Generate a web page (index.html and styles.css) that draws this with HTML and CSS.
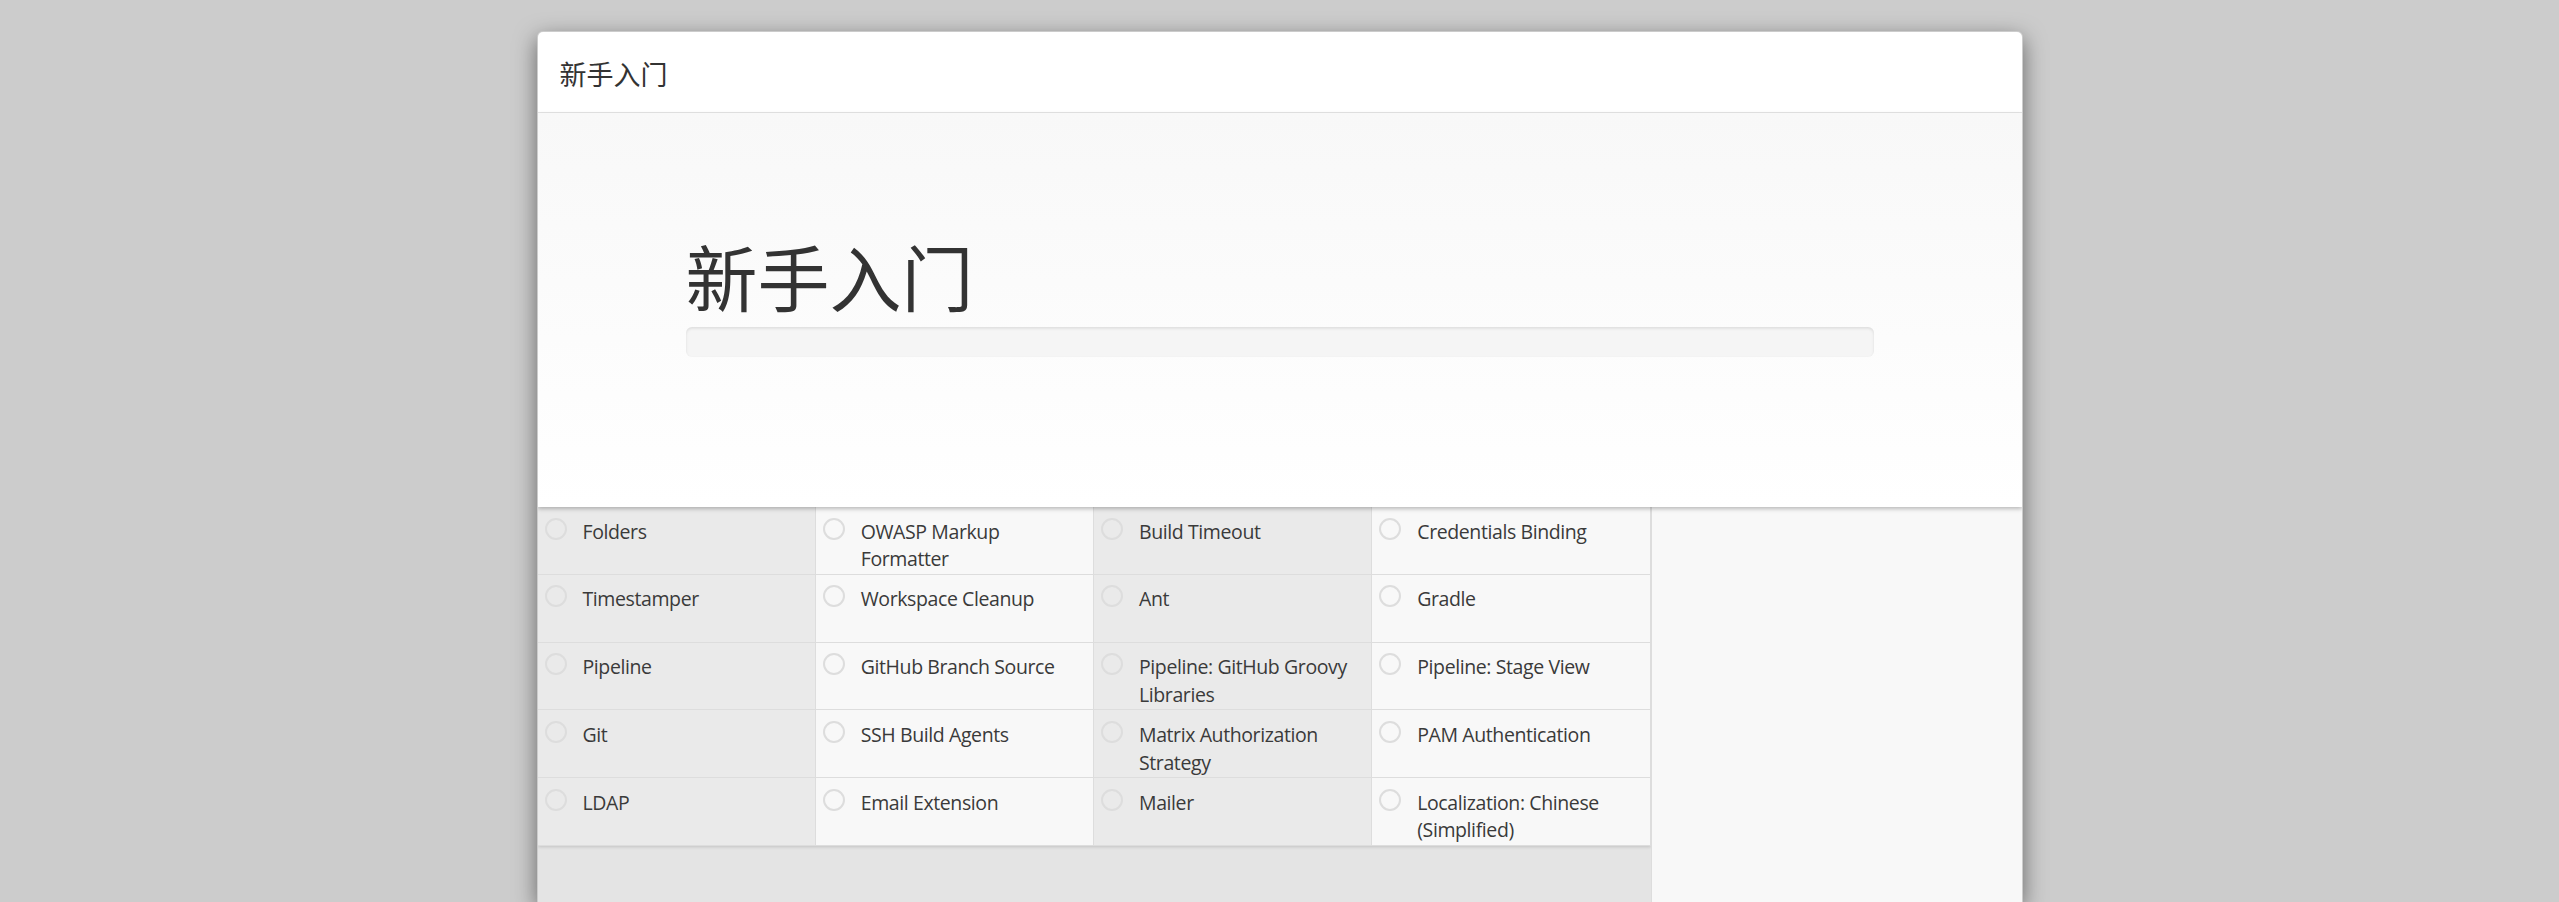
FILE: index.html
```html
<!DOCTYPE html>
<html lang="zh-CN">
<head>
<meta charset="utf-8">
<title>新手入门</title>
<link rel="stylesheet" href="styles.css">
</head>
<body>
<div class="modal">
  <div class="modal-header">
    <h4 class="modal-title">新手入门</h4>
  </div>
  <div class="modal-body">
    <div class="jumbotron">
      <h1 class="jumbo-title">新手入门</h1>
      <div class="progress"></div>
    </div>
    <div class="install-progress">
      <div class="plugins-pane">
        <div class="plugin-grid">
          <div class="plugin"><span class="status"></span><span class="name">Folders</span></div>
          <div class="plugin"><span class="status"></span><span class="name">OWASP Markup Formatter</span></div>
          <div class="plugin"><span class="status"></span><span class="name">Build Timeout</span></div>
          <div class="plugin"><span class="status"></span><span class="name">Credentials Binding</span></div>
          <div class="plugin"><span class="status"></span><span class="name">Timestamper</span></div>
          <div class="plugin"><span class="status"></span><span class="name">Workspace Cleanup</span></div>
          <div class="plugin"><span class="status"></span><span class="name">Ant</span></div>
          <div class="plugin"><span class="status"></span><span class="name">Gradle</span></div>
          <div class="plugin"><span class="status"></span><span class="name">Pipeline</span></div>
          <div class="plugin"><span class="status"></span><span class="name">GitHub Branch Source</span></div>
          <div class="plugin"><span class="status"></span><span class="name">Pipeline: GitHub Groovy Libraries</span></div>
          <div class="plugin"><span class="status"></span><span class="name">Pipeline: Stage View</span></div>
          <div class="plugin"><span class="status"></span><span class="name">Git</span></div>
          <div class="plugin"><span class="status"></span><span class="name">SSH Build Agents</span></div>
          <div class="plugin"><span class="status"></span><span class="name">Matrix Authorization Strategy</span></div>
          <div class="plugin"><span class="status"></span><span class="name">PAM Authentication</span></div>
          <div class="plugin"><span class="status"></span><span class="name">LDAP</span></div>
          <div class="plugin"><span class="status"></span><span class="name">Email Extension</span></div>
          <div class="plugin"><span class="status"></span><span class="name">Mailer</span></div>
          <div class="plugin"><span class="status"></span><span class="name">Localization: Chinese (Simplified)</span></div>
        </div>
      </div>
      <div class="console-pane"></div>
    </div>
  </div>
</div>
</body>
</html>
```

FILE: styles.css
```css
html, body {
  height: 902px;
  overflow: hidden;
}

body {
  margin: 0;
  background: #cccccc;
  color: #333333;
  font-family: "Open Sans", "Noto Sans CJK SC", sans-serif;
}

.modal {
  width: 1486px;
  height: 871px;
  margin: 31px auto 0;
  box-sizing: border-box;
  display: flex;
  flex-direction: column;
  background: #ffffff;
  border: 1px solid rgba(0, 0, 0, 0.2);
  border-bottom: 0;
  border-radius: 6px 6px 0 0;
  box-shadow: 0 7px 22px rgba(0, 0, 0, 0.5);
  overflow: hidden;
}

.modal-header {
  flex: none;
  height: 81px;
  box-sizing: border-box;
  padding: 4px 22px 0;
  border-bottom: 1px solid #e5e5e5;
  display: flex;
  align-items: center;
}

.modal-title {
  margin: 0;
  font-family: "Noto Sans CJK SC", sans-serif;
  font-weight: 400;
  font-size: 27px;
  line-height: 38px;
  color: #333333;
}

.modal-body {
  flex: 1;
  min-height: 0;
  display: flex;
  flex-direction: column;
}

.jumbotron {
  flex: none;
  position: relative;
  z-index: 1;
  height: 394px;
  box-sizing: border-box;
  padding: 122px 148px 0;
  background: linear-gradient(#f8f8f8, #ffffff);
  box-shadow: 0 2px 4px rgba(0, 0, 0, 0.25);
}

.jumbo-title {
  margin: 0;
  font-family: "Noto Sans CJK SC", sans-serif;
  font-weight: 400;
  font-size: 72px;
  line-height: 79px;
  color: #333333;
}

.progress {
  margin-top: 13px;
  height: 30px;
  background: #f5f5f5;
  border-radius: 6px;
  box-shadow: inset 0 1.5px 3px rgba(0, 0, 0, 0.1);
}

.install-progress {
  flex: 1;
  min-height: 0;
  display: flex;
}

.plugins-pane {
  width: 75%;
  background: #e4e4e4;
}

.console-pane {
  width: 25%;
  box-sizing: border-box;
  background: #f8f8f8;
  border-left: 1px solid #dddddd;
}

.plugin-grid {
  display: grid;
  grid-template-columns: repeat(4, 1fr);
  box-shadow: 0 1px 3px rgba(0, 0, 0, 0.15);
}

.plugin {
  height: 67.75px;
  box-sizing: border-box;
  padding: 10.5px 15px 0 7px;
  border-right: 1px solid #dddddd;
  border-bottom: 1px solid #dddddd;
  display: flex;
  align-items: flex-start;
  gap: 16px;
  font-size: 19.5px;
  line-height: 27.86px;
  letter-spacing: -0.4px;
  color: #3a3a3a;
  background: #f8f8f8;
}

.plugin:nth-child(4n+1),
.plugin:nth-child(4n+3) {
  background: #eaeaea;
}

.status {
  flex: none;
  width: 22px;
  height: 22px;
  margin-top: 0;
  box-sizing: border-box;
  border: 2.5px solid #dddddd;
  border-radius: 50%;
}
```
